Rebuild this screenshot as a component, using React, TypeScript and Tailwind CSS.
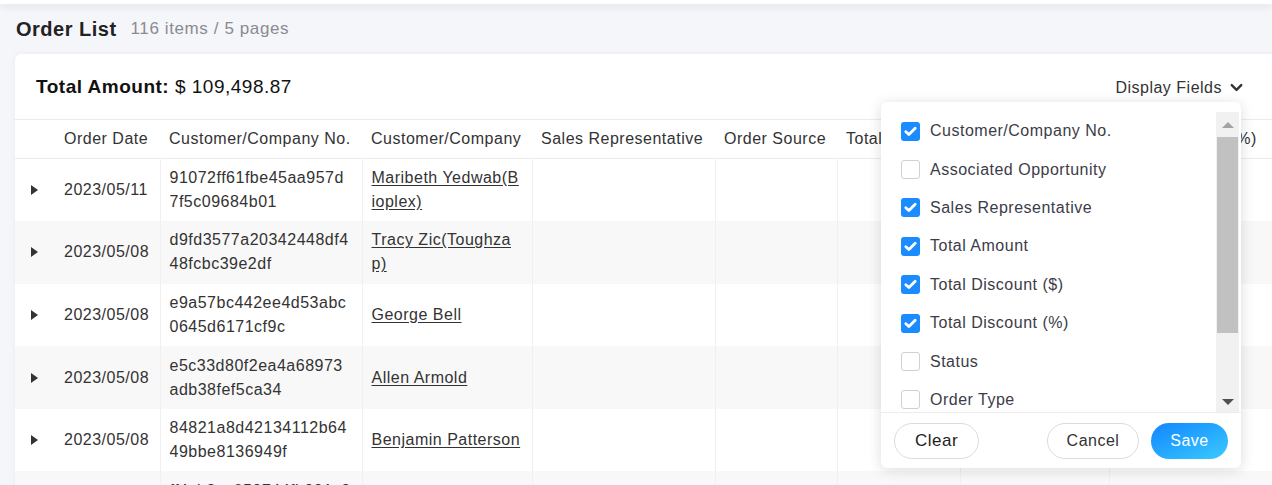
import { ChevronDown } from 'lucide-react';

type Order = { date: string; no: string[]; name: string[] };

const orders: Order[] = [
  { date: '2023/05/11', no: ['91072ff61fbe45aa957d', '7f5c09684b01'], name: ['Maribeth Yedwab(B', 'ioplex)'] },
  { date: '2023/05/08', no: ['d9fd3577a20342448df4', '48fcbc39e2df'], name: ['Tracy Zic(Toughza', 'p)'] },
  { date: '2023/05/08', no: ['e9a57bc442ee4d53abc', '0645d6171cf9c'], name: ['George Bell'] },
  { date: '2023/05/08', no: ['e5c33d80f2ea4a68973', 'adb38fef5ca34'], name: ['Allen Armold'] },
  { date: '2023/05/08', no: ['84821a8d42134112b64', '49bbe8136949f'], name: ['Benjamin Patterson'] },
  { date: '2023/05/08', no: ['ff4cb8ce059744fb991c9', '2d8e1a07b3f4'], name: ['Lisa Wong'] },
];

const columns = [
  'Order Date',
  'Customer/Company No.',
  'Customer/Company',
  'Sales Representative',
  'Order Source',
  'Total Amount',
  'Total Discount ($)',
  'Total Discount (%)',
];

const fields = [
  { label: 'Customer/Company No.', on: true },
  { label: 'Associated Opportunity', on: false },
  { label: 'Sales Representative', on: true },
  { label: 'Total Amount', on: true },
  { label: 'Total Discount ($)', on: true },
  { label: 'Total Discount (%)', on: true },
  { label: 'Status', on: false },
  { label: 'Order Type', on: false },
  { label: 'Payment Status', on: false },
];

function Checkbox({ on }: { on: boolean }) {
  if (!on) {
    return <span className="h-[19px] w-[19px] shrink-0 rounded-[3px] border border-[#d0d0d5] bg-white" />;
  }
  return (
    <span className="flex h-[19px] w-[19px] shrink-0 items-center justify-center rounded-[3px] bg-[#1a8cff]">
      <svg viewBox="0 0 16 16" className="h-[15px] w-[15px]" fill="none" stroke="white" strokeWidth="3" strokeLinecap="round" strokeLinejoin="round">
        <path d="M3 8.2l3.3 3.1L13 4.6" />
      </svg>
    </span>
  );
}

function DisplayFieldsMenu() {
  return (
    <div className="absolute left-[866px] top-[48px] flex h-[366px] w-[360px] flex-col rounded-md bg-white shadow-[0_2px_14px_rgba(0,0,0,0.14)]">
      <div className="flex h-[310px] pt-[10px]">
        <ul className="flex-1 overflow-hidden">
          {fields.map((f) => (
            <li key={f.label} className="flex h-[38.4px] items-center gap-[10px] pl-[20px] text-[16px] text-[#3c3c48]">
              <Checkbox on={f.on} />
              <span>{f.label}</span>
            </li>
          ))}
        </ul>
        {/* fake native scrollbar */}
        <div className="mr-[2px] flex w-[23px] flex-col items-center bg-[#f1f1f1]">
          <div className="flex h-[25px] items-center justify-center">
            <span className="h-0 w-0 border-x-[6px] border-b-[6px] border-x-transparent border-b-[#a3a3a3]" />
          </div>
          <div className="h-[196px] w-[21px] bg-[#c1c1c1]" />
          <div className="flex flex-1 items-end justify-center pb-[7px]">
            <span className="h-0 w-0 border-x-[6px] border-t-[6px] border-x-transparent border-t-[#505050]" />
          </div>
        </div>
      </div>
      <div className="flex flex-1 items-center border-t border-[#ececec] px-[13px]">
        <button className="h-[36px] w-[85px] rounded-full border border-[#dcdcdc] bg-white text-[17px] text-[#222]">Clear</button>
        <button className="ml-auto h-[36px] w-[92px] rounded-full border border-[#dcdcdc] bg-white text-[16px] text-[#333]">Cancel</button>
        <button className="ml-[12px] h-[36px] w-[77px] rounded-full bg-gradient-to-br from-[#1585ff] to-[#3ccaff] text-[16px] text-white">Save</button>
      </div>
    </div>
  );
}

export default function App() {
  return (
    <div className="relative h-[485px] w-[1272px] overflow-hidden bg-[#f5f6fa] font-['Liberation_Sans',Arial,sans-serif] tracking-[0.5px] text-[#333]">
      <div className="h-[4px] bg-white shadow-[0_2px_8px_rgba(0,0,0,0.12)]" />

      <div className="flex h-[50px] items-center gap-[14px] pl-[16px]">
        <h1 className="text-[20px] font-bold tracking-[0.5px] text-[#222]">Order List</h1>
        <span className="text-[17px] tracking-[0.6px] text-[#8a8a92]">116 items / 5 pages</span>
      </div>

      <div className="relative ml-[15px] w-[1290px] rounded-l-md bg-white shadow-[0_0_6px_rgba(0,0,0,0.05)]">
        <div className="flex h-[65px] items-center pl-[21px] pr-[59px] pt-[2px]">
          <p className="text-[19px] text-[#111]">
            <span className="font-bold">Total Amount:</span> $ 109,498.87
          </p>
          <button className="ml-auto flex items-center gap-[5px] text-[16px] text-[#333]">
            Display Fields
            <ChevronDown className="h-[19px] w-[19px]" strokeWidth={3} />
          </button>
        </div>

        <table className="w-full table-fixed border-collapse text-left text-[16px]">
          <colgroup>
            <col className="w-[40px]" />
            <col className="w-[105px]" />
            <col className="w-[202px]" />
            <col className="w-[170px]" />
            <col className="w-[183px]" />
            <col className="w-[122px]" />
            <col className="w-[123px]" />
            <col className="w-[149px]" />
            <col />
          </colgroup>
          <thead>
            <tr className="h-[39px] border-y border-[#ebebeb]">
              <th />
              {columns.map((c) => (
                <th key={c} className="whitespace-nowrap px-[9px] font-normal text-[#333]">
                  {c}
                </th>
              ))}
            </tr>
          </thead>
          <tbody>
            {orders.map((o, i) => (
              <tr key={i} className={`h-[62.6px] ${i % 2 ? 'bg-[#f8f8f8]' : 'bg-white'}`}>
                <td className="pl-[16px]">
                  <span className="block h-0 w-0 border-y-[5px] border-l-[7px] border-y-transparent border-l-[#333]" />
                </td>
                <td className="px-[9px] text-[#333]">{o.date}</td>
                <td className="border-l border-[#f0f0f0] px-[9px] leading-[24px] text-[#333]">
                  {o.no.map((l) => (
                    <span key={l} className="block">{l}</span>
                  ))}
                </td>
                <td className="border-l border-[#f0f0f0] px-[9px] leading-[24px] text-[#333]">
                  {o.name.map((l) => (
                    <span key={l} className="block underline underline-offset-2">{l}</span>
                  ))}
                </td>
                <td className="border-l border-[#f0f0f0]" />
                <td className="border-l border-[#f0f0f0]" />
                <td className="border-l border-[#f0f0f0]" />
                <td className="border-l border-[#f0f0f0]" />
                <td className="border-l border-[#f0f0f0]" />
              </tr>
            ))}
          </tbody>
        </table>

        <DisplayFieldsMenu />
      </div>
    </div>
  );
}
